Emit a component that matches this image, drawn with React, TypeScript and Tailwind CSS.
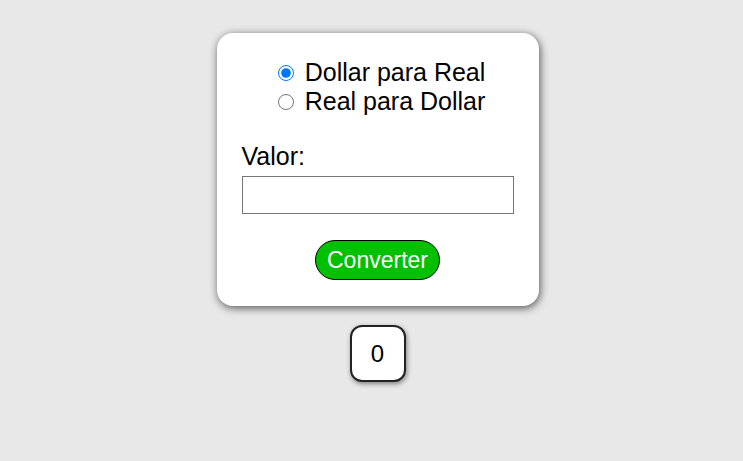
import React, { useState } from 'react'

const App = () => {
	const [mode, setMode] = useState('dr')
	return (
		<div className="min-h-[461px] w-full bg-[#e8e8e8] flex flex-col items-center pt-[33px] pl-[12px] font-['Liberation_Sans',Arial,sans-serif] text-black">
			<div className="w-[322px] bg-white rounded-[16px] shadow-[1px_2px_8px_rgba(0,0,0,0.65)] px-[25px] pt-[25px] pb-[26px] flex flex-col">
				<div className="flex flex-col items-center pl-[8px] text-[25px] leading-[29px]">
					<label className="flex items-center">
						<input type="radio" name="conv" checked={mode === 'dr'} onChange={() => setMode('dr')} className="w-[16px] h-[16px] mr-[11px] accent-[#0075ff]" />
						Dollar para Real
					</label>
					<label className="flex items-center">
						<input type="radio" name="conv" checked={mode === 'rd'} onChange={() => setMode('rd')} className="w-[16px] h-[16px] mr-[11px]" />
						Real para Dollar
					</label>
				</div>
				<label className="mt-[26px] text-[25px] leading-[29px]">Valor:</label>
				<input type="text" className="mt-[5px] h-[38px] w-full border border-[#767676] bg-white" />
				<div className="flex justify-center mt-[26px]">
					<button className="h-[40px] w-[125px] rounded-full bg-[#00c000] border border-black text-white text-[23px] leading-none">Converter</button>
				</div>
			</div>
			<div className="mt-[19px] w-[56px] h-[57px] bg-white border-2 border-[#222] rounded-[12px] shadow-[1px_2px_5px_rgba(0,0,0,0.45)] flex items-center justify-center text-[24px]">0</div>
		</div>
	)
}

export default App
